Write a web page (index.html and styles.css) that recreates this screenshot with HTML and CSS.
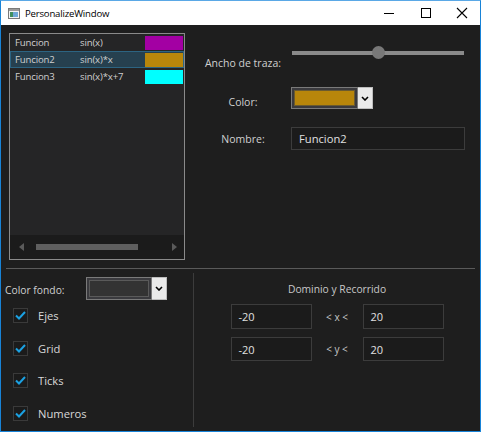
FILE: index.html
```html
<!DOCTYPE html>
<html>
<head>
<meta charset="utf-8">
<link rel="stylesheet" href="styles.css">
</head>
<body>
<div class="window">
  <div class="titlebar">
    <svg class="appicon" width="12" height="11" viewBox="0 0 12 11">
      <rect x="0.5" y="0.5" width="11" height="10" fill="#f4f4f4" stroke="#7a7a7a"/>
      <rect x="1" y="1" width="10" height="2" fill="#9a9a9a"/>
      <rect x="2" y="4" width="3" height="5" fill="#3f8f5f"/>
      <rect x="5" y="4" width="5" height="5" fill="#6fa8d8"/>
    </svg>
    <span class="title">PersonalizeWindow</span>
    <div class="controls">
      <svg class="ctl" width="46" height="24" viewBox="0 0 46 24"><line x1="22" y1="12.5" x2="32" y2="12.5" stroke="#000" stroke-width="1"/></svg>
      <svg class="ctl" width="36" height="24" viewBox="0 0 36 24"><rect x="13.5" y="7.5" width="9" height="9" fill="none" stroke="#000" stroke-width="1"/></svg>
      <svg class="ctl" width="36" height="24" viewBox="0 0 36 24"><path d="M13 7 L23 17 M23 7 L13 17" stroke="#000" stroke-width="1.1"/></svg>
    </div>
  </div>
  <div class="content">
    <div class="top">
      <div class="listbox">
        <div class="rows">
          <div class="row"><span class="c1">Funcion</span><span class="c2">sin(x)</span><span class="sw sw-mag"></span></div>
          <div class="row sel"><span class="c1">Funcion2</span><span class="c2">sin(x)*x</span><span class="sw sw-gold"></span></div>
          <div class="row"><span class="c1">Funcion3</span><span class="c2">sin(x)*x+7</span><span class="sw sw-cyan"></span></div>
        </div>
        <div class="hscroll">
          <svg width="12" height="12" viewBox="0 0 12 12"><path d="M8 2 L3 6 L8 10 Z" fill="#5a5a5a"/></svg>
          <div class="track"><div class="thumb"></div></div>
          <svg width="12" height="12" viewBox="0 0 12 12"><path d="M4 2 L9 6 L4 10 Z" fill="#5a5a5a"/></svg>
        </div>
      </div>
      <div class="props">
        <div class="plabel l1">Ancho de traza:</div>
        <div class="slider"><div class="strack"></div><div class="sthumb"></div></div>
        <div class="plabel l2">Color:</div>
        <div class="combo gold-combo">
          <div class="cbox"><div class="cfill fill-gold"></div></div>
          <div class="cbtn"><svg width="8" height="5" viewBox="0 0 8 5"><path d="M1 1 L4 4 L7 1" fill="none" stroke="#000" stroke-width="1.6"/></svg></div>
        </div>
        <div class="plabel l3">Nombre:</div>
        <div class="textbox name">Funcion2</div>
      </div>
    </div>
    <div class="sep"></div>
    <div class="bottom">
      <div class="left">
        <div class="fondo">
          <span class="flabel">Color fondo:</span>
          <div class="combo fondo-combo">
            <div class="cbox"><div class="cfill fill-dark"></div></div>
            <div class="cbtn"><svg width="8" height="5" viewBox="0 0 8 5"><path d="M1 1 L4 4 L7 1" fill="none" stroke="#000" stroke-width="1.6"/></svg></div>
          </div>
        </div>
        <div class="checks">
          <div class="check"><span class="box"><svg width="11" height="9" viewBox="0 0 11 9"><path d="M1 4.5 L4 7.5 L10 1" fill="none" stroke="#1ba1e2" stroke-width="2"/></svg></span><span class="clabel">Ejes</span></div>
          <div class="check"><span class="box"><svg width="11" height="9" viewBox="0 0 11 9"><path d="M1 4.5 L4 7.5 L10 1" fill="none" stroke="#1ba1e2" stroke-width="2"/></svg></span><span class="clabel">Grid</span></div>
          <div class="check"><span class="box"><svg width="11" height="9" viewBox="0 0 11 9"><path d="M1 4.5 L4 7.5 L10 1" fill="none" stroke="#1ba1e2" stroke-width="2"/></svg></span><span class="clabel">Ticks</span></div>
          <div class="check"><span class="box"><svg width="11" height="9" viewBox="0 0 11 9"><path d="M1 4.5 L4 7.5 L10 1" fill="none" stroke="#1ba1e2" stroke-width="2"/></svg></span><span class="clabel">Numeros</span></div>
        </div>
      </div>
      <div class="vsep"></div>
      <div class="right">
        <div class="dtitle">Dominio y Recorrido</div>
        <div class="dgrid">
          <div class="textbox dbox">-20</div>
          <div class="op">&lt; x &lt;</div>
          <div class="textbox dbox">20</div>
          <div class="textbox dbox">-20</div>
          <div class="op">&lt; y &lt;</div>
          <div class="textbox dbox">20</div>
        </div>
      </div>
    </div>
  </div>
</div>
</body>
</html>
```
FILE: styles.css
```css
* { box-sizing: border-box; }
html, body { margin: 0; padding: 0; background: #1e1e1e; }
body { font-family: "Open Sans", "Noto Sans", sans-serif; }

.window {
  width: 481px;
  height: 432px;
  border: 1px solid #1883d7;
  border-top-color: #5aa8e6;
  display: flex;
  flex-direction: column;
  background: #1e1e1e;
  overflow: hidden;
}

.titlebar {
  height: 24px;
  background: #ffffff;
  display: flex;
  align-items: center;
  flex: none;
}
.appicon { margin-left: 7px; margin-right: 5px; margin-top: 1px; }
.title { font-size: 9.6px; color: #000; letter-spacing: -0.2px; margin-top: 1px; }
.controls { margin-left: auto; display: flex; }
.ctl { display: block; }

.content { flex: 1; display: flex; flex-direction: column; }

.top { display: flex; height: 235px; flex: none; }

.listbox {
  margin: 8px 0 0 8px;
  width: 176px;
  height: 227px;
  border: 1px solid #8a8a8a;
  background: #252526;
  display: flex;
  flex-direction: column;
}
.rows { flex: 1; }
.row {
  height: 17px;
  display: flex;
  align-items: center;
  font-size: 9.6px;
  letter-spacing: -0.15px;
  color: #d0d0d0;
  border: 1px solid transparent;
}
.row.sel { background: #26404f; border-color: #2c6482; }
.c1 { width: 69px; padding-left: 4px; }
.c2 { width: 65px; }
.sw { margin-left: auto; width: 38px; height: 14px; }
.sw-mag { background: #a300a3; }
.sw-gold { background: #b8860b; }
.sw-cyan { background: #00ffff; }

.hscroll {
  height: 24px;
  background: #1b1b1b;
  display: flex;
  align-items: center;
  padding: 0 4px 0 6px;
  flex: none;
}
.hscroll .track { flex: 1; height: 6px; padding: 0 26px 0 8px; }
.hscroll .thumb { width: 102px; height: 6px; background: #5f5f5f; }

.props {
  margin: 21px 0 0 10px;
  display: grid;
  grid-template-columns: 96px 174px;
  grid-template-rows: 42px 39px 23px;
  align-items: start;
}
.plabel { font-size: 10.5px; color: #d0d0d0; text-align: center; line-height: 16px; }
.l1 { margin-top: 9px; }
.l2 { margin-top: 6px; }
.l3 { margin-top: 4px; }

.slider { position: relative; height: 13px; }
.strack { position: absolute; left: 1px; right: 1px; top: 5px; height: 4px; background: #8a8a8a; }
.sthumb { position: absolute; left: 81px; top: 0; width: 13px; height: 13px; border-radius: 50%; background: #787878; }

.combo { display: flex; height: 22px; }
.gold-combo { width: 82px; margin-top: -1px; }
.cbox { flex: 1; border: 1px solid #7a7a7a; background: #3a3a3e; padding: 2px; }
.cfill { height: 100%; border: 1px solid #555; }
.fill-gold { background: #b8860b; border-color: #6a5a30; }
.fill-dark { background: #333333; border-color: #5a5a5a; }
.cbtn { width: 15px; background: #e9e9e9; display: flex; align-items: center; justify-content: center; border: 1px solid #bdbdbd; border-left: none; }

.textbox {
  border: 1px solid #3c3c3c;
  background: #1b1b1b;
  color: #e0e0e0;
  font-size: 11px;
  display: flex;
  align-items: center;
  padding-left: 7px;
}
.name { height: 23px; font-size: 11.2px; }

.sep { height: 1px; background: #5a5a5a; margin: 8px 5px 0 5px; flex: none; }

.bottom { flex: 1; display: flex; }
.left { width: 192px; }
.fondo { display: flex; align-items: center; margin-top: 8px; height: 23px; }
.flabel { font-size: 10.3px; color: #d0d0d0; margin-left: 4px; width: 81px; margin-top: 2px; }
.fondo-combo { width: 81px; height: 23px; }

.checks { margin-top: 8px; display: flex; flex-direction: column; gap: 17.5px; }
.check { display: flex; align-items: center; height: 15px; }
.box {
  width: 15px; height: 15px; margin-left: 12px;
  border: 1px solid #3a3a3a; background: #1b1b1b;
  display: flex; align-items: center; justify-content: center;
}
.clabel { margin-left: 10px; font-size: 11.2px; color: #d8d8d8; }

.vsep { width: 1px; background: #3c3c3c; margin: 4px 0 4px 0; }

.right { flex: 1; display: flex; flex-direction: column; align-items: center; }
.dtitle { font-size: 10.3px; color: #c8c8c8; margin-top: 12px; line-height: 16px; }
.dgrid {
  margin-top: 7px;
  display: grid;
  grid-template-columns: 81px 51px 81px;
  grid-template-rows: 25px 24px;
  row-gap: 8px;
}
.dbox { height: 100%; }
.op { font-size: 10px; color: #c8c8c8; display: flex; align-items: center; justify-content: center; }
```
